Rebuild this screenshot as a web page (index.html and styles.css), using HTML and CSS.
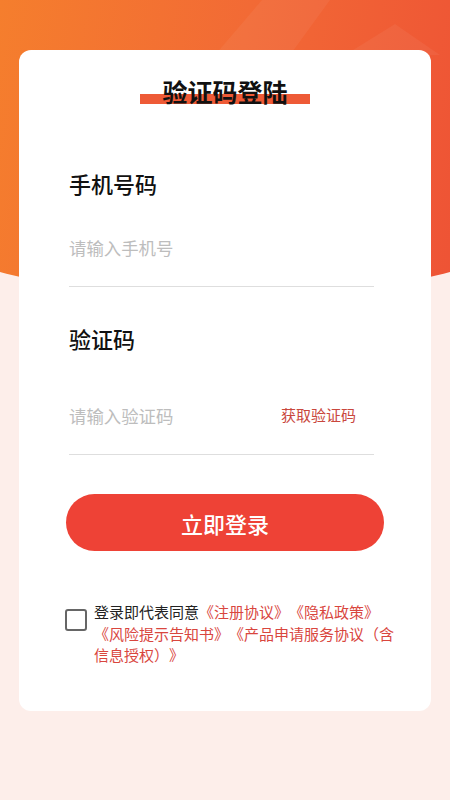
FILE: index.html
```html
<!DOCTYPE html>
<html lang="zh-CN">
<head>
<meta charset="utf-8">
<meta name="viewport" content="width=device-width, initial-scale=1">
<title>验证码登陆</title>
<link rel="stylesheet" href="styles.css">
</head>
<body>
<div class="hero">
  <div class="hero-band"></div>
  <div class="hero-peak"></div>
</div>
<main class="card">
  <div class="title-wrap"><h1 class="title">验证码登陆</h1></div>

  <div class="field">
    <div class="label">手机号码</div>
    <div class="input-row">
      <input class="input" type="tel" placeholder="请输入手机号">
    </div>
  </div>

  <div class="field field-code">
    <div class="label">验证码</div>
    <div class="input-row input-row-code">
      <input class="input" type="text" placeholder="请输入验证码">
      <span class="get-code">获取验证码</span>
    </div>
  </div>

  <button class="submit" type="button">立即登录</button>

  <div class="agree">
    <span class="checkbox"></span>
    <p class="agree-text">登录即代表同意<span class="link">《注册协议》《隐私政策》《风险提示告知书》《产品申请服务协议（含信息授权）》</span></p>
  </div>
</main>
</body>
</html>
```

FILE: styles.css
```css
* { box-sizing: border-box; }

html, body {
  margin: 0;
  padding: 0;
}

body {
  position: relative;
  width: 450px;
  min-height: 800px;
  background: #fdeeea;
  font-family: "Noto Sans CJK SC", "Noto Sans", sans-serif;
  text-spacing-trim: space-all;
  overflow: hidden;
}

.hero {
  position: absolute;
  top: 0;
  left: 0;
  width: 450px;
  height: 300px;
  background: linear-gradient(100deg, #f57e2d 0%, #f26a35 50%, #ee5335 100%);
  clip-path: ellipse(450px 209px at 50% 91px);
  z-index: 0;
}

.hero-band {
  position: absolute;
  inset: 0;
  background: rgba(255, 255, 255, 0.05);
  clip-path: polygon(215px 55px, 262px 0, 330px 0, 290px 55px);
}

.hero-peak {
  position: absolute;
  inset: 0;
  background: rgba(255, 255, 255, 0.05);
  clip-path: polygon(345px 55px, 395px 24px, 440px 55px);
}

.card {
  position: relative;
  z-index: 1;
  margin: 50px 19px 0;
  width: 412px;
  background: #ffffff;
  border-radius: 12px;
  padding: 26px 0 45px;
}

.title-wrap {
  text-align: center;
}

.title {
  position: relative;
  z-index: 0;
  isolation: isolate;
  display: inline-block;
  margin: 0;
  padding: 0 22px;
  font-size: 25px;
  line-height: 30px;
  font-weight: 700;
  color: #111;
}

.title::before {
  content: "";
  position: absolute;
  left: 0;
  right: 0;
  bottom: 2px;
  height: 10px;
  background: #ee5a36;
  z-index: -1;
}

.field {
  margin: 61px 0 0 50px;
  width: 305px;
}

.field-code {
  margin-top: 36px;
}

.label {
  font-size: 22px;
  line-height: 30px;
  font-weight: 500;
  color: #111;
}

.input-row {
  display: flex;
  align-items: center;
  padding: 32px 0 22px;
  border-bottom: 1px solid #dedede;
}

.input-row-code {
  padding: 45px 18px 22px 0;
}

.input {
  flex: 1;
  min-width: 0;
  height: 34px;
  border: none;
  outline: none;
  padding: 0;
  background: transparent;
  font-family: inherit;
  font-size: 17.4px;
  color: #333;
}

.input::placeholder {
  color: #bdbdbd;
}

.get-code {
  font-size: 15px;
  line-height: 34px;
  color: #c9473d;
}

.submit {
  display: block;
  margin: 39px 0 0 47px;
  width: 318px;
  height: 57px;
  border: none;
  border-radius: 29px;
  background: #ee4236;
  color: #fff;
  font-family: inherit;
  font-size: 22px;
  font-weight: 500;
}

.agree {
  display: flex;
  align-items: flex-start;
  gap: 7px;
  margin: 50px 0 0 46px;
}

.checkbox {
  flex: none;
  width: 22px;
  height: 22px;
  margin-top: 8px;
  border: 2px solid #666;
  border-radius: 3px;
}

.agree-text {
  margin: 0;
  width: 306px;
  font-size: 15px;
  line-height: 21.5px;
  color: #222;
}

.link {
  color: #d9463e;
}
```
